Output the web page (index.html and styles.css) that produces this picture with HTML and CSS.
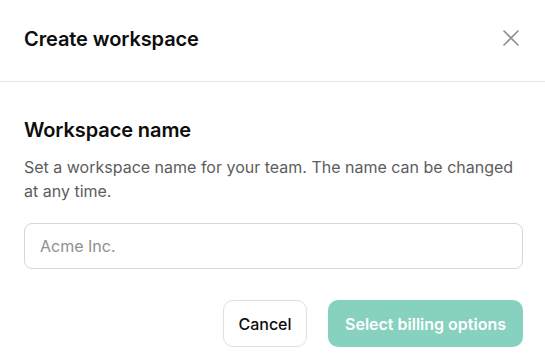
FILE: index.html
```html
<!DOCTYPE html>
<html lang="en">
<head>
<meta charset="utf-8">
<title>Create workspace</title>
<link rel="stylesheet" href="styles.css">
</head>
<body>
<div class="dialog">
  <div class="header">
    <div class="title">Create workspace</div>
    <button class="close" aria-label="Close">
      <svg width="16" height="16" viewBox="0 0 16 16" fill="none" stroke="#8f8f8f" stroke-width="1.6" stroke-linecap="round"><path d="M1 1L15 15M15 1L1 15"/></svg>
    </button>
  </div>
  <div class="content">
    <h2 class="heading">Workspace name</h2>
    <p class="desc">Set a workspace name for your team. The name can be changed at any time.</p>
    <input class="field" type="text" placeholder="Acme Inc.">
    <div class="actions">
      <button class="btn btn-secondary">Cancel</button>
      <button class="btn btn-primary" disabled>Select billing options</button>
    </div>
  </div>
</div>
</body>
</html>
```

FILE: styles.css
```css
html, body {
  margin: 0;
  padding: 0;
  background: #ffffff;
}
body {
  font-family: Inter, "Noto Sans", "Liberation Sans", sans-serif;
  color: #0d0d0d;
}
.dialog {
  width: 545px;
}
.header {
  display: flex;
  align-items: center;
  justify-content: space-between;
  height: 81px;
  padding: 0 26px 0 24px;
  border-bottom: 1px solid #e5e5e5;
}
.title {
  font-size: 20px;
  font-weight: 600;
  line-height: 28px;
  letter-spacing: -0.1px;
  margin-top: -4px;
}
.close {
  border: 0;
  background: none;
  padding: 0;
  width: 16px;
  height: 16px;
  margin-top: -6px;
  display: flex;
}
.content {
  padding: 34px 22px 16px 24px;
}
.heading {
  margin: 0;
  font-size: 20px;
  font-weight: 600;
  line-height: 28px;
  letter-spacing: -0.1px;
}
.desc {
  margin: 11px 0 0;
  font-size: 16px;
  line-height: 24px;
  color: #5d5d5d;
  letter-spacing: 0;
}
.field {
  display: block;
  box-sizing: border-box;
  width: 499px;
  height: 46px;
  margin-top: 20px;
  padding: 0 15px;
  border: 1px solid #d6d6d6;
  border-radius: 8px;
  font-family: inherit;
  font-size: 16px;
  color: #0d0d0d;
  outline: none;
}
.field::placeholder {
  color: #8f8f8f;
}
.actions {
  display: flex;
  justify-content: flex-end;
  gap: 21px;
  margin-top: 31px;
}
.btn {
  box-sizing: border-box;
  height: 47px;
  padding: 0 14px;
  border-radius: 10px;
  font-family: inherit;
  font-size: 16px;
  font-weight: 500;
  letter-spacing: 0;
}
.btn-secondary {
  background: #ffffff;
  border: 1px solid #e0e0e0;
  color: #0d0d0d;
  width: 84px;
}
.btn-primary {
  background: #87d1bf;
  border: 0;
  color: #ffffff;
  font-weight: 600;
  width: 195px;
}
```
